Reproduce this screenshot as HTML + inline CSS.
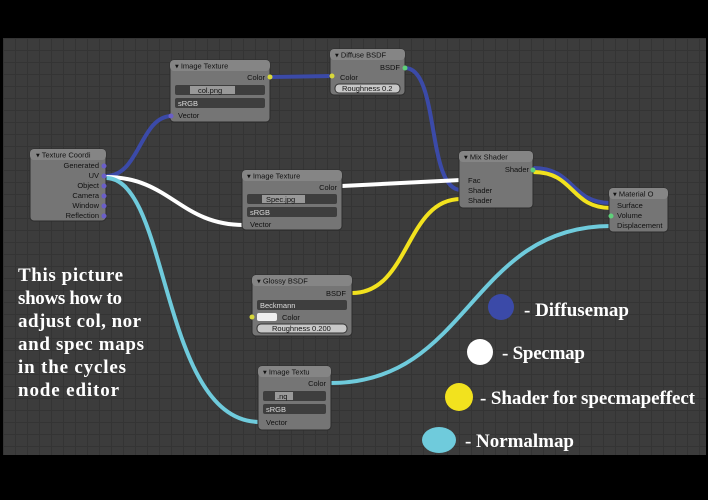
<!DOCTYPE html>
<html><head><style>
html,body{margin:0;padding:0;background:#000;}
body{width:708px;height:500px;overflow:hidden;position:relative;}
svg{position:absolute;left:0;top:0;}
</style></head><body>
<svg width="708" height="500" viewBox="0 0 708 500" xmlns="http://www.w3.org/2000/svg">
<defs>
<pattern id="g" width="12" height="12" patternUnits="userSpaceOnUse" x="3" y="38">
<rect width="12" height="12" fill="#3c3c3c"/>
<path d="M0 0.5H12M0.5 0V12" stroke="#343434" stroke-width="1"/>
</pattern>
</defs>
<rect x="0" y="0" width="708" height="500" fill="#000"/>
<rect x="3" y="38" width="703" height="417" fill="url(#g)"/>

<g fill="none" stroke-linecap="round">
<path d="M106 176 C140 176,140 116,172 116" stroke="#3b4aa8" stroke-width="4"/>
<path d="M270 77 L332 76" stroke="#3b4aa8" stroke-width="4"/>
<path d="M405 68 C440 68,426 190,461 190" stroke="#3b4aa8" stroke-width="4"/>
<path d="M533 168 C575 168,570 203,611 203" stroke="#3b4aa8" stroke-width="4"/>
<path d="M106 177 C170 177,180 225,244 225" stroke="#fff" stroke-width="4"/>
<path d="M342 186 L461 180" stroke="#fff" stroke-width="4"/>
<path d="M352 293 C410 293,405 199,461 199" stroke="#f2e21e" stroke-width="4"/>
<path d="M533 172 C575 172,570 208,611 208" stroke="#f2e21e" stroke-width="4"/>
<path d="M106 178 C170 178,160 422,260 422" stroke="#6fcbdc" stroke-width="4"/>
<path d="M331 383 C470 383,470 226,611 226" stroke="#6fcbdc" stroke-width="4"/>
</g>

<g font-family="Liberation Sans, sans-serif" font-size="7.5" fill="#111">
<rect x="30" y="149" width="76" height="72" rx="4" fill="#757575" stroke="#2c2c2c"/>
<rect x="30" y="149" width="76" height="11" rx="4" fill="#858585"/>
<text x="36" y="157.5">▾ Texture Coordi</text>
<g text-anchor="end">
<text x="99" y="168">Generated</text><text x="99" y="178">UV</text><text x="99" y="188">Object</text>
<text x="99" y="198">Camera</text><text x="99" y="208">Window</text><text x="99" y="218">Reflection</text>
</g>
<g fill="#6a5fc8"><circle cx="104" cy="166" r="2.5"/><circle cx="104" cy="176" r="2.5"/><circle cx="104" cy="186" r="2.5"/><circle cx="104" cy="196" r="2.5"/><circle cx="104" cy="206" r="2.5"/><circle cx="104" cy="216" r="2.5"/></g>

<rect x="170" y="60" width="100" height="62" rx="4" fill="#757575" stroke="#2c2c2c"/>
<rect x="170" y="60" width="100" height="11" rx="4" fill="#858585"/>
<text x="175" y="68.5">▾ Image Texture</text>
<text x="265" y="80" text-anchor="end">Color</text>
<rect x="175" y="85" width="90" height="10" rx="2" fill="#3e3e3e"/>
<rect x="190" y="86" width="45" height="8" fill="#999"/><text x="198" y="93">col.png</text>
<rect x="175" y="98" width="90" height="10" rx="2" fill="#3e3e3e"/><text x="178" y="106" fill="#ddd">sRGB</text>
<text x="178" y="118">Vector</text>
<circle cx="270" cy="77" r="2.5" fill="#d8d83a"/><circle cx="171" cy="116" r="2.5" fill="#6a5fc8"/>

<rect x="330" y="49" width="75" height="46" rx="4" fill="#757575" stroke="#2c2c2c"/>
<rect x="330" y="49" width="75" height="11" rx="4" fill="#858585"/>
<text x="335" y="57.5">▾ Diffuse BSDF</text>
<text x="400" y="70" text-anchor="end">BSDF</text>
<text x="340" y="80">Color</text>
<rect x="335" y="84" width="65" height="9" rx="4" fill="#c8c8c8" stroke="#333"/>
<text x="342" y="91">Roughness 0.2</text>
<circle cx="405" cy="68" r="2.5" fill="#5fd07a"/><circle cx="332" cy="76" r="2.5" fill="#d8d83a"/>

<rect x="242" y="170" width="100" height="60" rx="4" fill="#757575" stroke="#2c2c2c"/>
<rect x="242" y="170" width="100" height="11" rx="4" fill="#858585"/>
<text x="247" y="178.5">▾ Image Texture</text>
<text x="337" y="190" text-anchor="end">Color</text>
<rect x="247" y="194" width="90" height="10" rx="2" fill="#3e3e3e"/>
<rect x="262" y="195" width="43" height="8" fill="#999"/><text x="266" y="202">Spec.jpg</text>
<rect x="247" y="207" width="90" height="10" rx="2" fill="#3e3e3e"/><text x="250" y="215" fill="#ddd">sRGB</text>
<text x="250" y="227">Vector</text>

<rect x="459" y="151" width="74" height="57" rx="4" fill="#757575" stroke="#2c2c2c"/>
<rect x="459" y="151" width="74" height="11" rx="4" fill="#858585"/>
<text x="464" y="159.5">▾ Mix Shader</text>
<text x="529" y="172" text-anchor="end">Shader</text>
<text x="468" y="183">Fac</text><text x="468" y="193">Shader</text><text x="468" y="203">Shader</text>
<circle cx="533" cy="170" r="2.5" fill="#5fd07a"/>

<rect x="609" y="188" width="59" height="44" rx="4" fill="#757575" stroke="#2c2c2c"/>
<rect x="609" y="188" width="59" height="11" rx="4" fill="#858585"/>
<text x="613" y="196.5">▾ Material O</text>
<text x="617" y="208">Surface</text><text x="617" y="218">Volume</text><text x="617" y="228">Displacement</text>
<circle cx="611" cy="216" r="2.5" fill="#5fd07a"/>

<rect x="252" y="275" width="100" height="61" rx="4" fill="#757575" stroke="#2c2c2c"/>
<rect x="252" y="275" width="100" height="11" rx="4" fill="#858585"/>
<text x="257" y="283.5">▾ Glossy BSDF</text>
<text x="346" y="296" text-anchor="end">BSDF</text>
<rect x="257" y="300" width="90" height="10" rx="2" fill="#3e3e3e"/><text x="260" y="308" fill="#ddd">Beckmann</text>
<rect x="257" y="313" width="20" height="8" rx="2" fill="#eee"/><text x="282" y="320">Color</text>
<rect x="257" y="324" width="90" height="9" rx="4" fill="#c8c8c8" stroke="#333"/>
<text x="272" y="331">Roughness 0.200</text>
<circle cx="252" cy="317" r="2.5" fill="#d8d83a"/>

<rect x="258" y="366" width="73" height="64" rx="4" fill="#757575" stroke="#2c2c2c"/>
<rect x="258" y="366" width="73" height="11" rx="4" fill="#858585"/>
<text x="263" y="374.5">▾ Image Textu</text>
<text x="326" y="386" text-anchor="end">Color</text>
<rect x="263" y="391" width="63" height="10" rx="2" fill="#3e3e3e"/>
<rect x="275" y="392" width="18" height="8" fill="#999"/><text x="277" y="399">.nq</text>
<rect x="263" y="404" width="63" height="10" rx="2" fill="#3e3e3e"/><text x="266" y="412" fill="#ddd">sRGB</text>
<text x="266" y="425">Vector</text>
</g>

<g font-family="Liberation Serif, serif" font-weight="bold" font-size="19" fill="#fff">
<text x="18" y="281" textLength="105">This picture</text>
<text x="18" y="304" textLength="104">shows how to</text>
<text x="18" y="327" textLength="123">adjust col, nor</text>
<text x="18" y="350" textLength="126">and spec maps</text>
<text x="18" y="373" textLength="108">in the cycles</text>
<text x="18" y="396" textLength="101">node editor</text>
<text x="524" y="316" textLength="105">- Diffusemap</text>
<text x="502" y="359" textLength="83">- Specmap</text>
<text x="480" y="404" textLength="215">- Shader for specmapeffect</text>
<text x="465" y="447" textLength="109">- Normalmap</text>
</g>
<circle cx="501" cy="307" r="13" fill="#3b4aa8"/>
<circle cx="480" cy="352" r="13" fill="#fff"/>
<circle cx="459" cy="397" r="14" fill="#f2e21e"/>
<ellipse cx="439" cy="440" rx="17" ry="13" fill="#6fcbdc"/>
</svg>
</body></html>
